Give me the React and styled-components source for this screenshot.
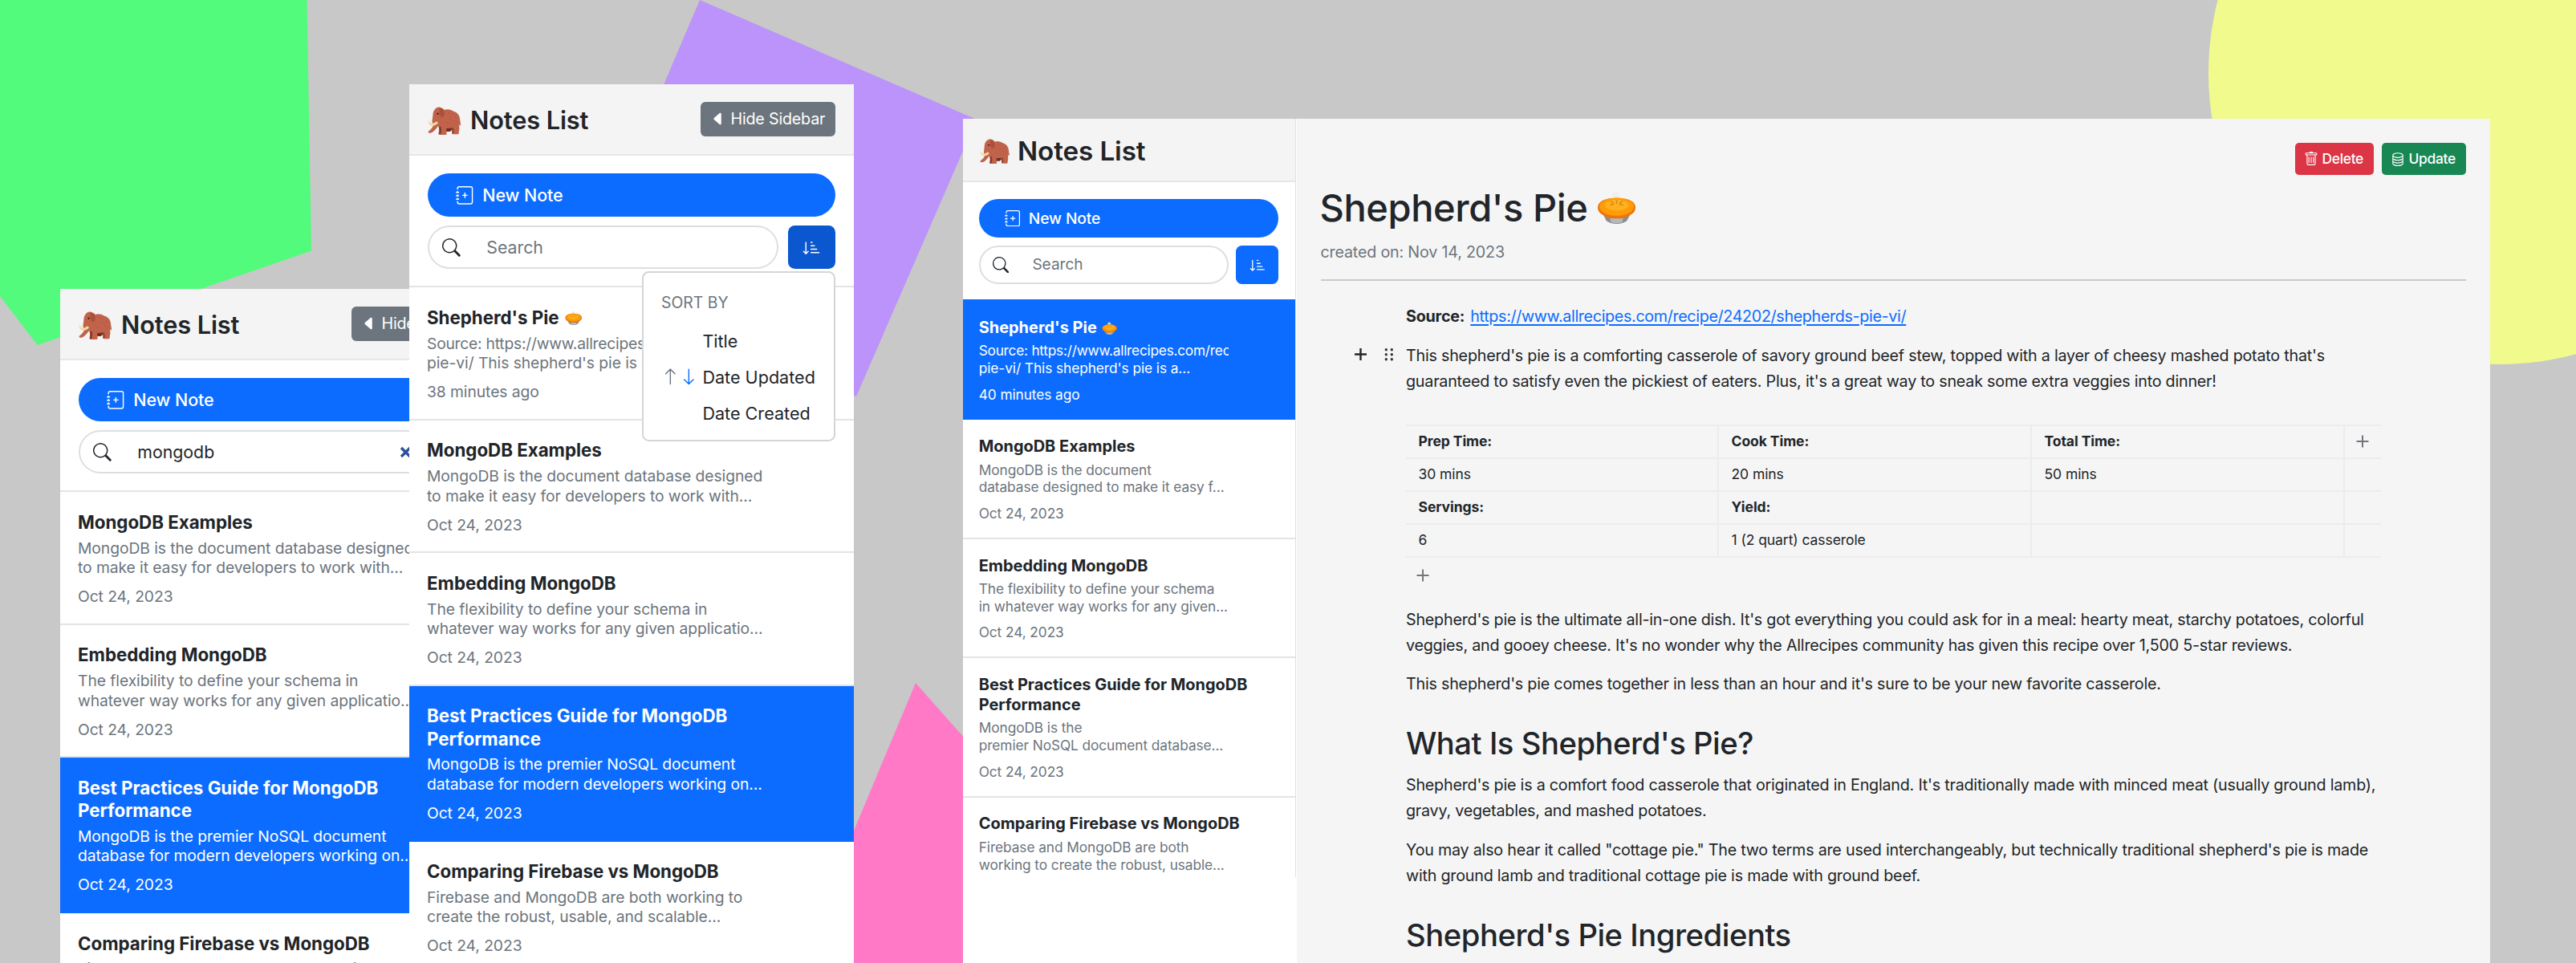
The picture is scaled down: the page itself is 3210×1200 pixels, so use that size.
import React from 'react';
import styled, { createGlobalStyle, css, ThemeProvider } from 'styled-components';
import {
  BsJournalPlus,
  BsSearch,
  BsSortDownAlt,
  BsCaretLeftFill,
  BsArrowUp,
  BsArrowDown,
  BsTrash,
  BsDatabase,
} from 'react-icons/bs';

/* Sidebar sizes are written for unit 1 and scaled by the theme. */
const s = (n) => ({ theme }) => `${(n * theme.unit).toFixed(2)}px`;

const wide = { unit: 1, title: 30.7, search: 437.5 };
const compact = { unit: 0.895, title: 33.2, search: 310.5 };

const GlobalStyle = createGlobalStyle`
  *, *::before, *::after { box-sizing: border-box; }
  body { margin: 0; }
  svg { display: block; flex: none; }
`;

const Canvas = styled.main`
  position: relative;
  width: 3210px;
  height: 1200px;
  overflow: hidden;
  background: #c8c8c8;
  color: #212529;
  font-family: Inter, 'Noto Sans', sans-serif;
`;

const Shapes = styled.svg`
  position: absolute;
  inset: 0;
`;

const SidebarWindow = styled.section`
  position: absolute;
  left: ${(p) => p.$x}px;
  top: ${(p) => p.$y}px;
  width: 554px;
  height: 1200px;
  background: #fff;
`;

const NoteWindow = styled.section`
  position: absolute;
  left: 1200px;
  top: 148px;
  width: 1903px;
  height: 1052px;
  display: flex;
  background: #f5f5f5;
`;

const CompactSidebar = styled.aside`
  width: 416px;
  background: #fff;
`;

const ClippedArea = styled.div`
  width: 415px;
  height: 945px;
  overflow: hidden;
  border-right: 1px solid #dee0e3;
`;

const SidebarHeader = styled.header`
  display: flex;
  align-items: center;
  justify-content: space-between;
  height: ${s(88.6)};
  padding: 0 ${s(23)};
  background: #f4f4f4;
  border-bottom: 2px solid #e6e7e8;
`;

const Brand = styled.h1`
  display: flex;
  align-items: center;
  gap: ${s(10.5)};
  margin: 0;
  padding-top: ${s(3.6)};
  font-size: ${({ theme }) => theme.title}px;
  font-weight: 600;
  letter-spacing: -0.1px;
  line-height: 1;
  white-space: nowrap;
`;

const MammothArt = styled.svg`
  width: ${s(42.5)};
  height: ${s(35)};
  margin-top: ${s(1)};
`;

const HideButton = styled.button`
  display: flex;
  align-items: center;
  gap: 5.5px;
  width: 168px;
  height: 43.5px;
  padding: 0 12px;
  border: 0;
  border-radius: 6px;
  background: #6c757d;
  color: #fff;
  font: 400 19.7px Inter, sans-serif;
  letter-spacing: -0.2px;
  white-space: nowrap;
`;

const Controls = styled.div`
  position: relative;
  display: flex;
  flex-direction: column;
  gap: ${s(11)};
  height: ${s(162.9)};
  padding: ${s(22.6)} ${s(23)} 0 ${s(22.6)};
`;

const NewNoteButton = styled.button`
  display: flex;
  align-items: center;
  gap: ${s(11)};
  height: ${s(54)};
  padding: 0 ${s(35)};
  border: 0;
  border-radius: ${s(27)};
  background: #0b6cff;
  color: #fff;
  font: 500 ${s(21.5)} Inter, sans-serif;
  letter-spacing: -0.1px;
`;

const SearchRow = styled.div`
  display: flex;
  justify-content: space-between;
`;

const SearchBox = styled.div`
  display: flex;
  align-items: center;
  gap: ${s(32.5)};
  width: ${({ theme }) => theme.search}px;
  height: ${s(54)};
  padding: 0 ${s(20)} 0 ${s(16.5)};
  border: 2px solid #dcdfe2;
  border-radius: ${s(27)};
  font-size: ${s(21.3)};
`;

const Query = styled.span`
  flex: 1;
  color: ${(p) => (p.$filled ? '#212529' : '#6c757d')};
`;

const SortButton = styled.button`
  display: grid;
  place-items: center;
  width: ${s(59.3)};
  height: ${s(54)};
  padding: 0;
  border: 0;
  border-radius: ${s(8.5)};
  background: ${(p) => (p.$open ? '#0b57d0' : '#0b6cff')};
  color: #fff;
`;

const Menu = styled.div`
  position: absolute;
  z-index: 2;
  right: 23px;
  top: 144.5px;
  width: 241px;
  height: 212px;
  padding: 15.8px 0 0 22px;
  border: 2px solid #d3d5d8;
  border-radius: 8.5px;
  background: #fff;
`;

const MenuHeading = styled.div`
  margin-bottom: 3px;
  color: #6c757d;
  font-size: 19.4px;
  line-height: 43px;
`;

const MenuItem = styled.div`
  display: grid;
  grid-template-columns: 22.7px 22.7px auto;
  align-items: center;
  height: 45.3px;
  font-size: 21.6px;
  white-space: nowrap;
`;

const MenuLabel = styled.span`
  grid-column: 3;
  padding-left: 6px;
`;

const Item = styled.article`
  padding: ${s(23.4)} ${s(22)} ${s(21.3)};
  border-bottom: 2px solid ${(p) => (p.$active ? '#0b6cff' : '#e3e4e5')};
  color: #6c757d;
  font-size: ${s(19.3)};
  letter-spacing: -0.07px;
  line-height: ${s(24.4)};
  white-space: nowrap;
  ${(p) =>
    p.$active &&
    css`
      background: #0b6cff;
      color: #fff;
    `}
`;

const List = styled.div`
  border-top: 2px solid ${(p) => (p.$flush ? '#0b6cff' : '#e3e4e5')};
`;

const ItemTitle = styled.h2`
  display: flex;
  flex-wrap: wrap;
  align-items: center;
  gap: 0 ${s(7)};
  margin: 0 0 ${s(5.6)};
  color: ${(p) => (p.$active ? '#fff' : '#212529')};
  font-size: ${s(22.3)};
  font-weight: 700;
  letter-spacing: 0;
  line-height: ${s(28.2)};
`;

const TitleLine = styled.span`
  display: block;
`;

const Excerpt = styled.div`
  width: 83%;
  overflow: hidden;
  margin-bottom: ${s(11.8)};
`;

const ExcerptLine = styled.div`
  letter-spacing: ${(p) => (p.$url ? -0.24 : -0.07)}px;
`;

const PieArt = styled.svg`
  width: ${(p) => p.$w}px;
  height: ${(p) => p.$w * 0.84}px;
`;

const Note = styled.div`
  flex: 1;
  padding: 30px 30.5px 0 29.5px;
`;

const Actions = styled.div`
  display: flex;
  justify-content: flex-end;
  gap: 10px;
`;

const ActionButton = styled.button`
  display: flex;
  align-items: center;
  gap: 4.5px;
  width: ${(p) => p.$w}px;
  height: 39.5px;
  padding: 0 11px;
  border: 0;
  border-radius: 5px;
  background: ${(p) => p.$tone};
  color: #fff;
  font: 500 17.4px Inter, sans-serif;
  letter-spacing: -0.3px;
`;

const NoteTitle = styled.h1`
  display: flex;
  align-items: center;
  gap: 12px;
  margin: 11px 0 0 -1px;
  font-size: 47px;
  font-weight: 500;
  letter-spacing: -0.4px;
  line-height: 60px;
`;

const Created = styled.div`
  margin-top: 12.6px;
  color: #6c757d;
  font-size: 19.7px;
  letter-spacing: -0.18px;
  line-height: 26px;
`;

const Rule = styled.hr`
  height: 2px;
  margin: 20.8px 0 28.6px;
  border: 0;
  background: #c9cacc;
`;

const Body = styled.div`
  padding-left: 106.5px;
  font-size: 19.7px;
  letter-spacing: -0.21px;
  line-height: 32.3px;
  white-space: nowrap;
`;

const Paragraph = styled.p`
  margin: 0 0 16px;
`;

const ActiveBlock = styled.div`
  display: flex;
  margin-left: -65px;
`;

const BlockTools = styled.svg`
  width: 65px;
  height: 32px;
`;

const Link = styled.a`
  margin-left: 1.8px;
  color: #0b6cff;
  letter-spacing: -0.33px;
  text-decoration: underline;
  text-decoration-thickness: 1.5px;
  text-underline-offset: 3px;
`;

const Table = styled.div`
  display: grid;
  grid-template-columns: 390px 390px 390px 45px;
  grid-auto-rows: 41.1px;
  width: 1215px;
  margin-top: 21.3px;
  border-top: 2px solid #ececed;
  font-size: 17.5px;
  letter-spacing: -0.07px;
`;

const Cell = styled.div`
  display: flex;
  align-items: center;
  padding-left: ${(p) => (p.$last ? 14 : 15.5)}px;
  border-bottom: 2px solid #ececed;
  border-right: ${(p) => (p.$last ? 0 : '2px solid #ececed')};
  font-weight: ${(p) => (p.$head ? 700 : 400)};
`;

const AddRow = styled.div`
  padding: 14.3px 0 0 12.5px;
  height: 60.8px;
`;

const Heading = styled.h2`
  margin: 33.6px 0 11.6px;
  font-size: 38.2px;
  font-weight: 500;
  letter-spacing: -0.45px;
  line-height: 48px;
`;

function Mammoth() {
  return (
    <MammothArt viewBox="0 0 130 108">
      <path d="M66 60h24l2 30-8 6H66z" fill="#6e2d22" />
      <path
        d="M20 24C24 8 36 0 46 2c8 1 14 5 17 10 10-4 24-2 34 5 12 3 22 12 25 24 2 10 3 22 5 32l-7-4 1 14c0 7-2 10-2 16 0 4-1 7-4 7H96c-4 0-4-4-3-8 2-6 0-11-3-16-8 1-14 2-19 1l1 20c0 4-2 5-5 5H45c-4 0-5-3-4-7 3-8 2-18 0-28-5 5-8 10-13 16-7 8-14 13-22 12-5-1-6-5-3-8 8-5 14-12 17-20 1-4-2-7-3-12-1-6 0-12 1-17z"
        fill="#c0634a"
      />
      <path d="M44 4c10 2 19 9 20 20 0 9-5 17-11 18-4-4-7-9-9-15z" fill="#ab513b" />
      <path d="M41 74c4 10 4 20 1 29l8 2c3-8 3-18 1-27zM90 82c3 5 5 11 3 18l6 3c2-8 1-15-2-22z" fill="#873c2c" />
      <path d="M3 50c-3 10 0 20 10 23 10 2 20-2 27-11l-8-6c-5 6-12 9-18 7-6-1-9-6-11-13z" fill="#f4dba6" />
      <circle cx="38" cy="27" r="3.6" fill="#3d2019" />
      <path
        d="M78 22l5 6M92 26l5 6M104 38l4 6M84 42l5 6M98 52l5 6M110 56l3 6M72 58l5 6"
        stroke="#ab513b"
        strokeWidth="2.4"
      />
    </MammothArt>
  );
}

function Pie({ width }) {
  return (
    <PieArt $w={width} viewBox="0 0 50 42">
      <ellipse cx="24" cy="6" rx="5" ry="5" fill="#ededed" opacity="0.8" />
      <path d="M6 26l6 12c6 5 20 5 26 0l6-12z" fill="#8b8f92" />
      <path d="M16 32l2 8c5 1 9 1 14 0l2-8z" fill="#b5b9bb" />
      <path d="M1 21C1 13 11 9 25 9s24 4 24 12c0 4-2 7-6 9-5 4-11 5-18 5S12 34 7 30c-4-2-6-5-6-9z" fill="#ee740c" />
      <ellipse cx="25" cy="20" rx="22" ry="11.4" fill="#fd9c08" />
      <ellipse cx="25" cy="18" rx="15" ry="7" fill="#ffb01f" />
      <path
        d="M25 12v4M18 13l3 3M32 13l-3 3M17 18l4-1M33 18l-4-1"
        stroke="#dd8208"
        strokeWidth="1.3"
        strokeLinecap="round"
      />
    </PieArt>
  );
}

function Plus() {
  return (
    <svg width="16" height="16" viewBox="0 0 16 16">
      <path d="M8 .5v15M.5 8h15" stroke="#73767d" strokeWidth="2" />
    </svg>
  );
}

const shepherd = (age) => ({
  title: ["Shepherd's Pie"],
  pie: true,
  text: ['Source: https://www.allrecipes.com/recipe/24202/shepherds-', "pie-vi/ This shepherd's pie is a..."],
  date: age,
});

const wideNotes = [
  {
    title: ['MongoDB Examples'],
    text: ['MongoDB is the document database designed', 'to make it easy for developers to work with...'],
  },
  {
    title: ['Embedding MongoDB'],
    text: ['The flexibility to define your schema in', 'whatever way works for any given applicatio...'],
  },
  {
    title: ['Best Practices Guide for MongoDB', 'Performance'],
    text: ['MongoDB is the premier NoSQL document', 'database for modern developers working on...'],
    active: true,
  },
  {
    title: ['Comparing Firebase vs MongoDB'],
    text: ['Firebase and MongoDB are both working to', 'create the robust, usable, and scalable...'],
  },
];

const compactNotes = [
  { ...shepherd('40 minutes ago'), active: true },
  { title: ['MongoDB Examples'], text: ['MongoDB is the document', 'database designed to make it easy f...'] },
  { title: ['Embedding MongoDB'], text: ['The flexibility to define your schema', 'in whatever way works for any given...'] },
  {
    title: ['Best Practices Guide for MongoDB', 'Performance'],
    text: ['MongoDB is the', 'premier NoSQL document database...'],
  },
  { title: ['Comparing Firebase vs MongoDB'], text: ['Firebase and MongoDB are both', 'working to create the robust, usable...'] },
];

function Sidebar({ theme, notes, query, menuOpen, hideButton }) {
  const icon = 22.7 * theme.unit;
  return (
    <ThemeProvider theme={theme}>
      <SidebarHeader>
        <Brand>
          <Mammoth />
          Notes List
        </Brand>
        {hideButton && (
          <HideButton>
            <BsCaretLeftFill size={20} />
            Hide Sidebar
          </HideButton>
        )}
      </SidebarHeader>
      <Controls>
        <NewNoteButton>
          <BsJournalPlus size={icon} />
          New Note
        </NewNoteButton>
        <SearchRow>
          <SearchBox>
            <BsSearch size={icon} />
            <Query $filled={Boolean(query)}>{query || 'Search'}</Query>
            {query && (
              <svg width="15" height="15" viewBox="0 0 15 15">
                <path d="M2 2l11 11M13 2L2 13" stroke="#2c5196" strokeWidth="3.4" />
              </svg>
            )}
          </SearchBox>
          <SortButton $open={menuOpen}>
            <BsSortDownAlt size={icon} />
          </SortButton>
        </SearchRow>
        {menuOpen && (
          <Menu>
            <MenuHeading>SORT BY</MenuHeading>
            <MenuItem>
              <MenuLabel>Title</MenuLabel>
            </MenuItem>
            <MenuItem>
              <BsArrowUp size={22.7} color="#6c757d" />
              <BsArrowDown size={22.7} color="#0b6cff" />
              <MenuLabel>Date Updated</MenuLabel>
            </MenuItem>
            <MenuItem>
              <MenuLabel>Date Created</MenuLabel>
            </MenuItem>
          </Menu>
        )}
      </Controls>
      <List $flush={notes[0].active}>
        {notes.map((n) => (
          <Item key={n.title[0]} $active={n.active}>
            <ItemTitle $active={n.active}>
              {n.title.map((line) => (
                <TitleLine key={line}>{line}</TitleLine>
              ))}
              {n.pie && <Pie width={21.5 * theme.unit} />}
            </ItemTitle>
            <Excerpt>
              {n.text.map((line) => (
                <ExcerptLine key={line} $url={line.includes('https')}>
                  {line}
                </ExcerptLine>
              ))}
            </Excerpt>
            <div>{n.date || 'Oct 24, 2023'}</div>
          </Item>
        ))}
      </List>
    </ThemeProvider>
  );
}

const tableRows = [
  { head: true, cells: ['Prep Time:', 'Cook Time:', 'Total Time:'] },
  { cells: ['30 mins', '20 mins', '50 mins'] },
  { head: true, cells: ['Servings:', 'Yield:', ''] },
  { cells: ['6', '1 (2 quart) casserole', ''] },
];

export default function App() {
  return (
    <>
      <GlobalStyle />
      <Canvas>
        <Shapes width="3210" height="1200" viewBox="0 0 3210 1200">
          <polygon points="0,0 382.5,0 388,312.5 46.7,430 0,369" fill="#52fb7b" />
          <polygon points="872,0 1217,149 1067,494 725,345" fill="#bb93fa" />
          <polygon points="1141,851 1450,1200 995,1200" fill="#ff79c6" />
          <circle cx="3115" cy="91" r="363" fill="#f1fa8c" />
        </Shapes>

        <SidebarWindow $x={75} $y={360}>
          <Sidebar theme={wide} notes={wideNotes} query="mongodb" hideButton />
        </SidebarWindow>

        <SidebarWindow $x={510} $y={105}>
          <Sidebar theme={wide} notes={[shepherd('38 minutes ago'), ...wideNotes]} menuOpen hideButton />
        </SidebarWindow>

        <NoteWindow>
          <CompactSidebar>
            <ClippedArea>
              <Sidebar theme={compact} notes={compactNotes} />
            </ClippedArea>
          </CompactSidebar>
          <Note>
            <Actions>
              <ActionButton $w={98} $tone="#dc3545">
                <BsTrash size={18} />
                Delete
              </ActionButton>
              <ActionButton $w={104.5} $tone="#198754">
                <BsDatabase size={18} />
                Update
              </ActionButton>
            </Actions>
            <NoteTitle>
              Shepherd's Pie
              <Pie width={49} />
            </NoteTitle>
            <Created>created on: Nov 14, 2023</Created>
            <Rule />
            <Body>
              <Paragraph>
                <b>Source:</b> <Link>https://www.allrecipes.com/recipe/24202/shepherds-pie-vi/</Link>
              </Paragraph>
              <ActiveBlock>
                <BlockTools viewBox="0 0 65 32">
                  <path d="M8.5 7v15M1 14.5h15" stroke="#24242c" strokeWidth="2.4" />
                  <g fill="#34343c">
                    {[8.7, 14.7, 20.7].map((y) => (
                      <React.Fragment key={y}>
                        <circle cx="40.3" cy={y} r="1.7" />
                        <circle cx="47.3" cy={y} r="1.7" />
                      </React.Fragment>
                    ))}
                  </g>
                </BlockTools>
                <Paragraph>
                  This shepherd's pie is a comforting casserole of savory ground beef stew, topped with a layer of cheesy mashed potato that's
                  <br />
                  guaranteed to satisfy even the pickiest of eaters. Plus, it's a great way to sneak some extra veggies into dinner!
                </Paragraph>
              </ActiveBlock>
              <Table>
                {tableRows.map((row, r) => (
                  <React.Fragment key={r}>
                    {row.cells.map((cell, i) => (
                      <Cell key={i} $head={row.head}>
                        {cell}
                      </Cell>
                    ))}
                    <Cell $last>{r === 0 && <Plus />}</Cell>
                  </React.Fragment>
                ))}
              </Table>
              <AddRow>
                <Plus />
              </AddRow>
              <Paragraph>
                Shepherd's pie is the ultimate all-in-one dish. It's got everything you could ask for in a meal: hearty meat, starchy potatoes, colorful
                <br />
                veggies, and gooey cheese. It's no wonder why the Allrecipes community has given this recipe over 1,500 5-star reviews.
              </Paragraph>
              <Paragraph>This shepherd's pie comes together in less than an hour and it's sure to be your new favorite casserole.</Paragraph>
              <Heading>What Is Shepherd's Pie?</Heading>
              <Paragraph>
                Shepherd's pie is a comfort food casserole that originated in England. It's traditionally made with minced meat (usually ground lamb),
                <br />
                gravy, vegetables, and mashed potatoes.
              </Paragraph>
              <Paragraph>
                You may also hear it called "cottage pie." The two terms are used interchangeably, but technically traditional shepherd's pie is made
                <br />
                with ground lamb and traditional cottage pie is made with ground beef.
              </Paragraph>
              <Heading>Shepherd's Pie Ingredients</Heading>
            </Body>
          </Note>
        </NoteWindow>
      </Canvas>
    </>
  );
}
